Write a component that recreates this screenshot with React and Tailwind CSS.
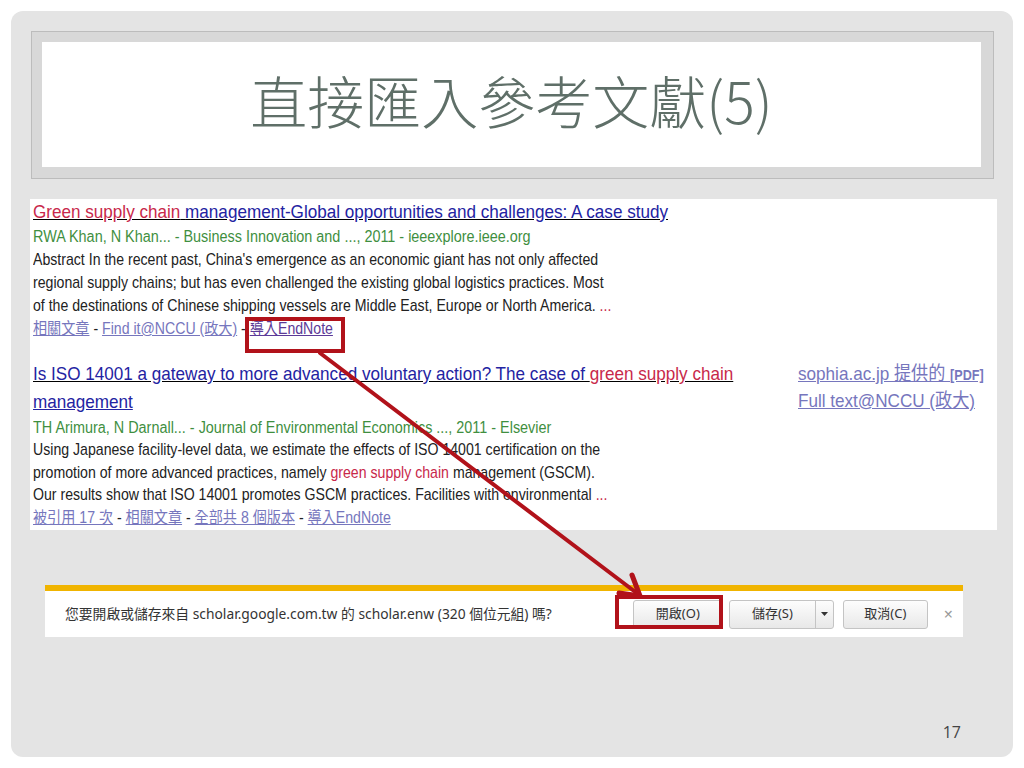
const sans = { fontFamily: '"Liberation Sans", "Noto Sans CJK TC", sans-serif' }

function Line({ className = '', children }) {
  return (
    <div className={`whitespace-nowrap origin-left scale-x-90 ${className}`}>{children}</div>
  )
}

const red = 'text-[#c8284a]'
const blue = 'text-[#2323a2]'
const green = 'text-[#3f8f3f]'
const link = 'underline text-[#7676bd]'

function Sep() {
  return <span className="text-[#222]"> - </span>
}

function Result1() {
  return (
    <div>
      <Line className="h-[26px] leading-[26px] text-[19px] underline">
        <span className={red}>Green supply chain</span>{' '}
        <span className={blue}>management-Global opportunities and challenges: A case study</span>
      </Line>
      <Line className={`h-[23px] leading-[23px] text-[16px] ${green}`}>
        RWA Khan, N Khan... - Business Innovation and ..., 2011 - ieeexplore.ieee.org
      </Line>
      <div className="text-[15.7px] text-[#222]">
        <Line className="h-[23px] leading-[23px]">
          Abstract In the recent past, China's emergence as an economic giant has not only affected
        </Line>
        <Line className="h-[23px] leading-[23px]">
          regional supply chains; but has even challenged the existing global logistics practices. Most
        </Line>
        <Line className="h-[23px] leading-[23px]">
          of the destinations of Chinese shipping vessels are Middle East, Europe or North America. <span className={red}>...</span>
        </Line>
        <Line className="h-[23px] leading-[23px]">
          <span className={link}>相關文章</span>
          <Sep />
          <span className={link}>Find it@NCCU (政大)</span>
          <Sep />
          <span className="underline text-[#5c3a98]">導入EndNote</span>
        </Line>
      </div>
    </div>
  )
}

function Result2() {
  return (
    <div className="flex mt-[20px]">
      <div className="w-[765px]">
        <Line className="h-[28px] leading-[28px] text-[19px] underline">
          <span className={blue}>Is ISO 14001 a gateway to more advanced voluntary action? The case of </span>
          <span className={red}>green supply chain</span>
        </Line>
        <Line className={`h-[28px] leading-[28px] text-[19px] underline ${blue}`}>management</Line>
        <Line className={`h-[23px] leading-[23px] text-[16px] ${green}`}>
          TH Arimura, N Darnall... - Journal of Environmental Economics ..., 2011 - Elsevier
        </Line>
        <div className="text-[15.7px] text-[#222]">
          <Line className="h-[22.5px] leading-[22.5px]">
            Using Japanese facility-level data, we estimate the effects of ISO 14001 certification on the
          </Line>
          <Line className="h-[22.5px] leading-[22.5px]">
            promotion of more advanced practices, namely <span className={red}>green supply chain</span> management (GSCM).
          </Line>
          <Line className="h-[22.5px] leading-[22.5px]">
            Our results show that ISO 14001 promotes GSCM practices. Facilities with environmental <span className={red}>...</span>
          </Line>
          <Line className="h-[22.5px] leading-[22.5px]">
            <span className={link}>被引用 17 次</span>
            <Sep />
            <span className={link}>相關文章</span>
            <Sep />
            <span className={link}>全部共 8 個版本</span>
            <Sep />
            <span className={link}>導入EndNote</span>
          </Line>
        </div>
      </div>
      <div className="text-[19px]">
        <Line className={`h-[27px] leading-[27px] ${link}`}>
          sophia.ac.jp 提供的 <span className="font-bold text-[14px]">[PDF]</span>
        </Line>
        <Line className={`h-[27px] leading-[27px] ${link}`}>Full text@NCCU (政大)</Line>
      </div>
    </div>
  )
}

function Button({ children, className = '' }) {
  return (
    <div className={`h-[29px] flex items-center justify-center rounded-[3px] border border-[#c4c4c4] bg-gradient-to-b from-[#fdfdfd] to-[#e8e8e8] text-[13px] text-[#333] ${className}`}>
      {children}
    </div>
  )
}

export default function App() {
  return (
    <div className="relative w-[1024px] h-[768px] bg-white p-[11px] overflow-hidden">
      <div className="h-[746px] rounded-[12px] bg-[#e4e4e4] flex flex-col">
        <div className="mt-[20px] ml-[20px] w-[963px] h-[148px] border border-[#bcbcbc] bg-[#d8d8d8] pt-[10px] pl-[10px] pr-[12px] pb-[11px]">
          <div className="h-full bg-white flex items-center justify-center pb-[10px]">
            <h1
              className="text-[57px] font-light text-[#5f6f68] leading-none"
              style={{ fontFamily: '"Noto Sans CJK TC", "Noto Sans", sans-serif' }}
            >
              直接匯入參考文獻(5)
            </h1>
          </div>
        </div>

        <div className="mt-[20px] ml-[19px] w-[967px] h-[331px] bg-white pl-[3px] overflow-hidden" style={sans}>
          <Result1 />
          <Result2 />
        </div>

        <div className="mt-[55px] ml-[34px] w-[918px] border-t-[6px] border-[#f0b400] bg-white h-[52px] flex items-center pl-[20px] pr-[10px]"
          style={{ fontFamily: '"Noto Sans", "Noto Sans CJK TC", sans-serif' }}>
          <span className="text-[13.8px] text-[#333]">
            您要開啟或儲存來自 scholar.google.com.tw 的 scholar.enw (320 個位元組) 嗎?
          </span>
          <div className="ml-auto flex items-center">
            <Button className="w-[90px]">開啟(O)</Button>
            <div className="ml-[6px] w-[105px] h-[29px] flex rounded-[3px] border border-[#c4c4c4] bg-gradient-to-b from-[#fdfdfd] to-[#e8e8e8] text-[13px] text-[#333]">
              <div className="flex-1 flex items-center justify-center border-r border-[#c4c4c4]">儲存(S)</div>
              <div className="w-[17px] flex items-center justify-center">
                <svg width="7" height="4" viewBox="0 0 7 4"><path d="M0 0h7L3.5 4z" fill="#333" /></svg>
              </div>
            </div>
            <Button className="ml-[9px] w-[85px]">取消(C)</Button>
            <span className="ml-[16px] text-[16px] text-[#999] leading-none">×</span>
          </div>
        </div>

        <div className="mt-auto pb-[13px] pr-[52px] text-right text-[16px] text-[#444]" style={{ fontFamily: '"Open Sans", sans-serif' }}>
          17
        </div>
      </div>

      {/* annotation: red boxes and arrow */}
      <div className="absolute left-[245px] top-[317px] w-[100px] h-[36px] border-[4px] border-[#b1121a]" />
      <div className="absolute left-[615px] top-[595px] w-[108px] h-[34px] border-[4px] border-[#b1121a]" />
      <svg className="absolute left-0 top-0" width="1024" height="768" viewBox="0 0 1024 768">
        <g stroke="#b1121a" strokeWidth="4" fill="none" strokeLinecap="round">
          <path d="M320 353 L638 594" />
          <path d="M632 575 L640 596 L619 593" strokeLinejoin="miter" strokeWidth="5" />
        </g>
      </svg>
    </div>
  )
}
